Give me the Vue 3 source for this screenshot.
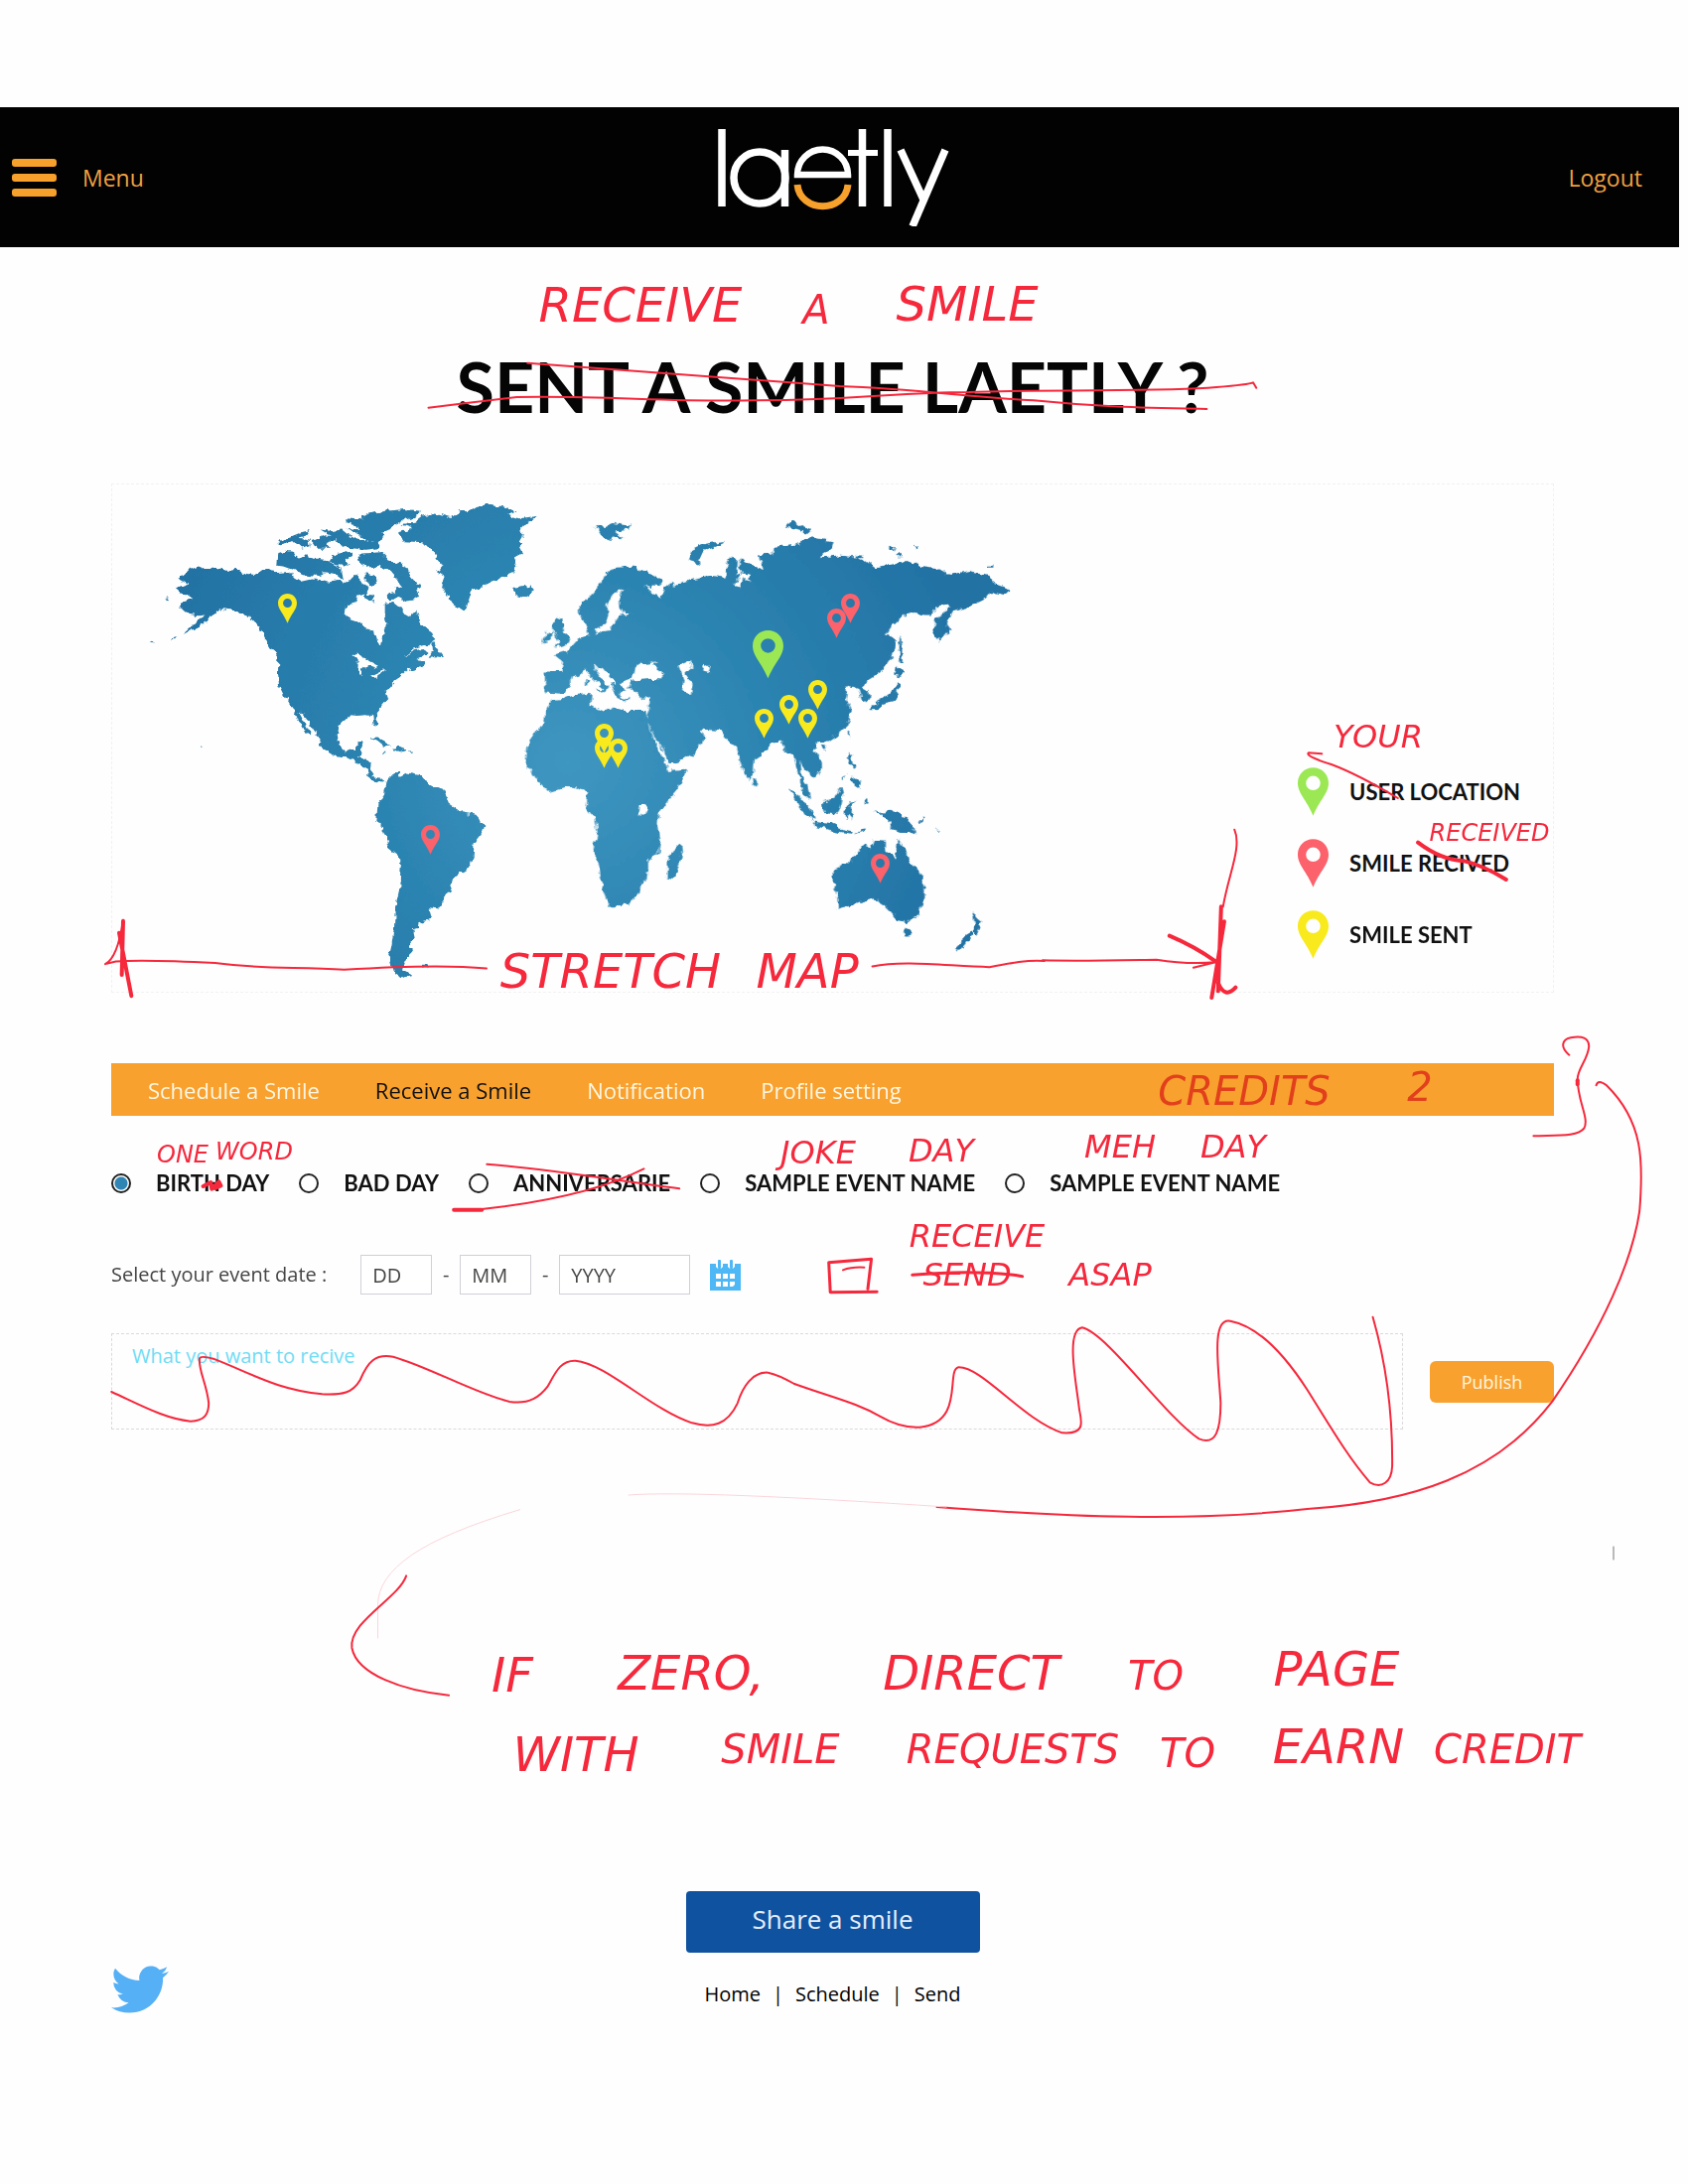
<script setup>
import { ref } from 'vue'

const tabs = ['Schedule a Smile', 'Receive a Smile', 'Notification', 'Profile setting']
const activeTab = ref(1)

const events = [
  { id: 'birthday', label: 'BIRTH DAY' },
  { id: 'badday', label: 'BAD DAY' },
  { id: 'anniversary', label: 'ANNIVERSARIE' },
  { id: 'sample-a', label: 'SAMPLE EVENT NAME' },
  { id: 'sample-b', label: 'SAMPLE EVENT NAME' },
]
const selectedEvent = ref('birthday')

const legend = [
  { kind: 'user', label: 'USER LOCATION' },
  { kind: 'received', label: 'SMILE RECIVED' },
  { kind: 'sent', label: 'SMILE SENT' },
]

const pins = [
  { kind: 'sent', x: 279, y: 597, w: 19 },
  { kind: 'received', x: 423, y: 830, w: 19 },
  { kind: 'user', x: 757, y: 634, w: 31 },
  { kind: 'received', x: 846, y: 597, w: 19 },
  { kind: 'received', x: 832, y: 612, w: 19 },
  { kind: 'sent', x: 813, y: 684, w: 19 },
  { kind: 'sent', x: 784, y: 699, w: 19 },
  { kind: 'sent', x: 759, y: 713, w: 19 },
  { kind: 'sent', x: 803, y: 713, w: 19 },
  { kind: 'sent', x: 598, y: 743, w: 19 },
  { kind: 'sent', x: 598, y: 728, w: 19 },
  { kind: 'sent', x: 612, y: 743, w: 19 },
  { kind: 'received', x: 876, y: 859, w: 19 },
]

// Reviewer's handwritten words: centre x, baseline y, text size
const notes = [
  { t: 'RECEIVE', x: 645, y: 324, s: 48 },
  { t: 'A', x: 822, y: 326, s: 40 },
  { t: 'SMILE', x: 974, y: 323, s: 48 },
  { t: 'STRETCH', x: 615, y: 995, s: 48 },
  { t: 'MAP', x: 813, y: 995, s: 48 },
  { t: 'YOUR', x: 1388, y: 753, s: 32 },
  { t: 'RECEIVED', x: 1500, y: 847, s: 24 },
  { t: 'CREDITS', x: 1253, y: 1113, s: 40, on: true },
  { t: '2', x: 1430, y: 1109, s: 40, on: true },
  { t: 'ONE', x: 184, y: 1171, s: 24 },
  { t: 'WORD', x: 256, y: 1168, s: 24 },
  { t: 'JOKE', x: 824, y: 1172, s: 32 },
  { t: 'DAY', x: 948, y: 1170, s: 32 },
  { t: 'MEH', x: 1128, y: 1166, s: 32 },
  { t: 'DAY', x: 1242, y: 1166, s: 32 },
  { t: 'RECEIVE', x: 984, y: 1256, s: 32 },
  { t: 'SEND', x: 974, y: 1295, s: 32 },
  { t: 'ASAP', x: 1118, y: 1295, s: 32 },
  { t: 'IF', x: 516, y: 1704, s: 48 },
  { t: 'ZERO,', x: 696, y: 1702, s: 48 },
  { t: 'DIRECT', x: 978, y: 1702, s: 48 },
  { t: 'TO', x: 1164, y: 1702, s: 40 },
  { t: 'PAGE', x: 1346, y: 1698, s: 48 },
  { t: 'WITH', x: 580, y: 1784, s: 48 },
  { t: 'SMILE', x: 786, y: 1776, s: 40 },
  { t: 'REQUESTS', x: 1020, y: 1776, s: 40 },
  { t: 'TO', x: 1196, y: 1780, s: 40 },
  { t: 'EARN', x: 1348, y: 1776, s: 48 },
  { t: 'CREDIT', x: 1518, y: 1776, s: 40 },
]
</script>

<template>
  <div class="sheet">
    <svg class="defs" aria-hidden="true">
      <symbol id="pin" viewBox="0 0 32 50">
        <path fill-rule="evenodd" d="M16 0C7 0 0 7 0 16c0 11 9 17 16 34 7-17 16-23 16-34C32 7 25 0 16 0zM16 8.500a7.500 7.500 0 1 1 0 15 7.500 7.500 0 0 1 0-15z" />
      </symbol>
    </svg>

    <header class="topbar">
      <button class="menu" type="button">
        <svg width="45" height="38" viewBox="0 0 45 38" aria-hidden="true">
          <rect width="45" height="8" rx="3" /><rect y="15" width="45" height="8" rx="3" /><rect y="30" width="45" height="8" rx="3" />
        </svg>
        <span>Menu</span>
      </button>
      <svg class="logo" viewBox="0 0 234 98" role="img" aria-label="laetly">
        <g fill="none" stroke="#fff" stroke-width="7.500">
          <line x1="4" y1="0" x2="4" y2="78" />
          <circle cx="42" cy="49" r="26" />
          <line x1="67.500" y1="21" x2="67.500" y2="78" />
          <path d="M80 46a25.500 25.500 0 0 1 51 0z" stroke-width="6.500" />
          <path d="M80 56c3 29 48 29 51 0" stroke="#f7a02c" stroke-width="7" />
          <line x1="145.500" y1="0" x2="145.500" y2="78" />
          <line x1="131" y1="24" x2="161" y2="24" stroke-width="6" />
          <line x1="171" y1="0" x2="171" y2="78" />
          <line x1="184" y1="21" x2="207" y2="71" />
          <line x1="229" y1="21" x2="196" y2="98" />
        </g>
      </svg>
      <a class="logout" href="#logout">Logout</a>
    </header>

    <main>
      <h1>SENT A SMILE LAETLY ?</h1>

      <section class="map-panel" aria-label="Smile map">
        <svg class="map" viewBox="112 487 920 511" role="img" aria-label="World map with smile pins">
          <defs>
            <radialGradient id="sea-west" gradientUnits="userSpaceOnUse" cx="1467" cy="849" r="1300">
              <stop offset="0" stop-color="#3f97c1" /><stop offset=".5" stop-color="#2b83b0" /><stop offset="1" stop-color="#2373a4" />
            </radialGradient>
            <radialGradient id="sea-east" gradientUnits="userSpaceOnUse" cx="200" cy="849" r="1200">
              <stop offset="0" stop-color="#3f97c1" /><stop offset=".5" stop-color="#2b83b0" /><stop offset="1" stop-color="#2272a4" />
            </radialGradient>
            <filter id="coast" filterUnits="userSpaceOnUse" x="112" y="487" width="920" height="511">
              <feTurbulence type="fractalNoise" baseFrequency="0.15" numOctaves="2" seed="4" />
              <feDisplacementMap in="SourceGraphic" scale="7" xChannelSelector="R" yChannelSelector="G" />
            </filter>
          </defs>
          <g filter="url(#coast)">
            <g transform="translate(100 480) scale(.33333 .338)" fill="url(#sea-west)">
              <!-- North and Central America -->
              <path d="M300 262L325 272 345 267 380 277 420 275 440 286 470 290 490 275 512 270 525 285 560 282 590 298 610 310 640 303 690 312 720 308 745 315 760 300 775 285 790 315 812 328 800 345 775 352 768 368 740 390 737 405 750 420 780 430 800 450 825 458 835 490 846 495 855 458 866 440 860 410 860 375 885 370 905 385 918 405 935 415 955 395 965 425 980 445 1005 465 1015 485 1000 495 960 505 935 520 915 535 950 515 975 512 990 520 970 535 955 545 985 548 975 560 950 568 925 575 905 595 890 605 875 625 860 635 868 660 850 680 833 700 838 740 830 745 822 710 800 708 775 710 750 708 725 730 716 765 722 800 740 818 768 808 778 788 795 784 788 815 780 835 808 840 818 850 815 875 825 890 845 895 860 905 850 910 830 905 810 890 800 865 775 850 745 835 710 832 675 812 663 795 665 780 645 755 620 715 598 695 630 755 635 772 620 760 600 725 585 690 555 650 540 620 537 580 538 540 520 515 500 485 478 445 455 420 430 405 395 395 365 390 345 400 325 430 315 430 325 408 300 412 270 408 240 395 245 375 275 365 270 348 240 345 225 332 265 318 240 305 235 298 255 290 270 272z" />
              <path d="M325 405L345 385 350 392 325 420 295 445 248 468 280 440 300 420zM216 480l12-4-6 8zM152 491l8-4v6zM195 358l14-2-5 6zM303 803l8 2-4 6z" />
              <!-- Arctic archipelago -->
              <path d="M535 225L560 218 585 222 595 240 620 232 640 245 665 245 690 250 712 262 730 275 735 308 712 290 680 285 650 296 610 290 585 275 555 265 532 262z" />
              <path d="M538 190L575 175 600 165 635 157 625 172 600 180 632 185 635 205 610 212 585 190 560 195 540 200zM640 190L680 172 705 175 715 195 690 190 680 202 700 212 655 212zM665 155L700 160 730 155 755 175 790 185 840 190 848 210 800 215 750 210 720 195 700 175zM692 250L710 225 740 220 765 232 740 245 755 262 720 262z" />
              <path d="M738 122L780 125 810 108 860 100 920 95 970 100 945 118 910 130 880 152 850 165 858 182 835 192 800 182 765 165 742 150 785 155 775 140 745 135z" />
              <path d="M780 230L815 228 850 225 868 242 898 255 925 268 935 295 955 318 972 322 955 335 965 355 950 365 925 368 905 358 870 362 865 350 895 345 890 330 912 325 895 300 875 278 840 265 810 268 785 250zM800 285l30 8 5 25-20 5-15-15zM798 345l30 8-5 18-25-12z" />
              <!-- Greenland and Iceland -->
              <path d="M900 165L945 152 910 140 955 130 975 115 1010 105 1060 118 1085 98 1115 98 1135 85 1180 80 1225 88 1260 102 1230 112 1265 122 1320 115 1285 138 1270 155 1280 180 1265 205 1275 225 1248 240 1258 262 1245 285 1210 300 1175 312 1150 330 1122 338 1112 370 1103 400 1080 385 1065 375 1045 345 1030 320 1040 295 1018 280 1035 262 1018 242 1000 210 965 192 915 190z" />
              <path d="M1240 325l18 5 25-5 20-4 8 20-30 17-25-6-8-14z" />
              <!-- Newfoundland, Cuba, Hispaniola -->
              <path d="M1003 495l10-3 5 18 22 28-25-5-20 2 10-18zM812 773l25 0 42 24-20 4-22-18zM885 808l15-5 22 6-20 8zM853 816h10v4h-10zM932 815h12v4h-12zM975 1452h18l-4 8-12-2z" />
              <!-- South America -->
              <path d="M862 905L880 885 900 875 905 890 925 880 970 888 990 912 1035 928 1050 955 1052 972 1095 998 1135 1005 1162 1035 1155 1060 1130 1090 1127 1130 1112 1165 1065 1195 1060 1225 1040 1255 1020 1285 995 1282 1000 1315 965 1325 962 1345 945 1350 950 1372 932 1395 942 1412 925 1435 915 1465 940 1485 910 1493 885 1475 872 1430 880 1395 888 1340 890 1285 903 1230 910 1135 872 1105 855 1050 835 1022 838 975 858 945z" />
              <!-- Great Lakes -->
              <path fill="#fff" d="M760 535l25-12 18 18 35 18v10l-30-10-15 12-5 20-8-2 2-35zM815 592l48-22-35 28z" />
            </g>
            <g transform="translate(500 480) scale(.35714 .338)" fill="url(#sea-east)">
              <!-- Europe and Asia -->
              <path d="M133 578L180 580 185 550 162 530 195 520 225 485 260 470 250 435 230 405 228 380 265 350 295 310 305 285 335 268 385 265 410 280 440 290 462 305 462 320 430 318 445 345 465 350 470 330 495 310 500 325 520 312 560 300 600 292 640 298 645 260 660 238 678 250 672 290 690 285 680 262 690 240 715 262 750 275 745 255 735 232 775 230 780 210 840 200 885 178 945 190 940 215 905 240 960 232 1010 238 1040 250 1065 270 1120 260 1150 245 1190 262 1240 270 1275 290 1330 278 1385 290 1405 320 1445 335 1430 350 1390 340 1370 365 1330 385 1300 395 1285 400 1265 440 1275 455 1245 490 1225 460 1235 425 1260 405 1280 380 1240 385 1215 410 1175 405 1140 415 1110 445 1098 465 1125 485 1120 520 1085 575 1050 600 1030 620 1052 650 1040 670 1030 665 1020 630 990 620 975 630 988 645 985 660 998 700 985 740 960 765 925 790 900 790 895 815 915 850 915 875 895 897 865 868 855 845 858 890 875 920 882 960 862 940 848 885 835 830 815 820 800 785 770 800 740 830 725 840 722 880 708 905 690 870 675 805 655 790 630 755 570 750 535 750 515 710 522 708 545 740 570 745 585 775 560 820 500 855 483 855 470 815 440 770 418 720 428 690 430 655 405 655 370 630 375 605 420 598 465 600 460 575 440 560 450 548 425 555 395 560 380 600 350 612 360 635 350 648 330 610 290 575 275 565 290 600 315 620 300 640 295 622 260 590 245 575 230 590 210 595 200 625 185 645 135 640z" />
              <path d="M163 415l20 8 2 28 20 30-5 15-38 12 12-18-10-20-10-20zM135 465l20-8-2 30-25 8zM275 145l30 3 20-12 50 8-5 12-40 5 25 20-30-2-5 10-22-8zM540 250l10-35 35-18 55-8-5 8-50 18-20 25 5 20zM810 145l20-18 30 20 25 10-10 10-25-12zM1107 200l15 5-5 15-10-5zM1175 203l12 5-7 8zM1010 232h18v8h-18zM1380 262h18v6h-18zM1125 228h16v6h-16zM275 628l25 8-2 8zM250 600l8 5-3 18-6-2zM345 658h28v5h-28zM400 655l14 0-8 6z" />
              <path fill="#fff" d="M358 332L345 350 345 380 355 402 385 402 345 410 325 440 318 455 290 460 275 470 275 452 300 440 312 410 310 375 330 345zM385 570L405 552 430 572 465 582 465 602 430 600 382 605zM510 560L540 545 550 565 530 585 550 620 545 645 520 640 525 600zM585 555l15 10-5 15-15-5zM415 320l50 25-5 12-28-18zM690 285l-25 40 15 5 10-30 18 0 8 15-5-25zM275 562l15 28 18 15 30 50 30-2 5-25-25 15-22-40-30-35z" />
              <path d="M280 590l30 25-5 25-10 2 3-22-20-12zM320 612l30 5 15 20-20 5 2 20-12-5z" />
              <!-- Africa and Madagascar -->
              <path d="M152 662L185 660 215 648 265 645 262 680 300 700 325 685 360 695 415 695 425 740 450 800 485 875 535 872 515 920 485 960 455 1005 452 1030 460 1080 455 1115 425 1145 425 1190 405 1210 400 1235 370 1272 312 1280 295 1220 285 1150 268 1115 282 1060 275 1015 250 985 255 940 225 925 200 920 145 938 110 900 80 850 85 795 110 755 132 730 135 695z" />
              <path d="M520 1088l3 25-20 75-8 10-15-5 0-60 15-20z" />
              <path fill="#fff" d="M402 976h15l3 14-6 14h-10l-4-10z" />
              <!-- East and South-East Asia islands -->
              <path d="M1135 468l8 40 2 45-10 0-2-50zM1125 562l25 15-15 15-15-5zM1128 605l5 15-8 45-35 8-25 20-10 0 0-15 35-20 25-25zM990 757l8 2-5 20zM915 795l15 2-8 20zM992 818l10 10-2 25 15 10-10 5-15-20zM1005 890l20 15-5 20-15-5-10-20zM985 880l-15 20 5 2zM720 895l15 15-5 12-8-8zM822 925l35 30 30 40 8 25-25-10-20-30zM915 970l30-10 25-40 5 25-5 30-10 30-40-5zM892 1025l50 8 30 15 30 5-5 8-50-8-50-15zM985 970l30-5-25 15 12 10-2 30-12-15-5 15-5-25zM1005 1065l30-20 0 8zM1065 990l20 8 25-5 30 10 25 25 20 38-25-10-25 0-25-10-5-20zM1185 1030l15-15 2 5-12 12zM1240 1045l8 10-5 0zM1035 960h8v12h-8z" />
              <!-- Australia and New Zealand -->
              <path d="M945 1170L995 1145 1015 1115 1032 1095 1055 1105 1065 1080 1095 1082 1095 1110 1120 1135 1130 1078 1145 1100 1160 1140 1190 1170 1205 1215 1205 1250 1185 1305 1150 1325 1130 1320 1110 1295 1090 1275 1060 1255 1025 1265 1000 1275 960 1285 958 1250 945 1200zM1145 1345l22 5-5 18h-10zM1338 1290l15 25 12 10-12 35-12-5 5-22zM1335 1350l6 12-20 25-20 25-10-12 25-25z" />
            </g>
          </g>
          <svg v-for="(p, i) in pins" :key="i" :x="p.x" :y="p.y" :width="p.w" :height="p.w * 1.56" viewBox="0 0 32 50" :class="p.kind">
            <use href="#pin" width="32" height="50" />
          </svg>
        </svg>
        <ul class="legend">
          <li v-for="l in legend" :key="l.kind">
            <svg :class="l.kind" width="31" height="49" aria-hidden="true"><use href="#pin" width="31" height="49" /></svg>
            <span>{{ l.label }}</span>
          </li>
        </ul>
      </section>

      <nav class="tabs">
        <a v-for="(tab, i) in tabs" :key="tab" href="#" :class="{ active: i === activeTab }" @click.prevent="activeTab = i">{{ tab }}</a>
      </nav>

      <form @submit.prevent>
        <div class="events">
          <label v-for="e in events" :key="e.id">
            <input v-model="selectedEvent" type="radio" name="event" :value="e.id">
            <span>{{ e.label }}</span>
          </label>
        </div>

        <div class="date">
          <label for="day">Select your event date :</label>
          <input id="day" type="text" placeholder="DD">
          <span>-</span>
          <input type="text" placeholder="MM" aria-label="Month">
          <span>-</span>
          <input class="year" type="text" placeholder="YYYY" aria-label="Year">
          <button type="button" class="calendar" aria-label="Open calendar">
            <svg width="31" height="31" viewBox="0 0 31 31">
              <path d="M0 4h6v3a4 4 0 0 0 7 0V4h5v3a4 4 0 0 0 7 0V4h6v27H0z" />
              <rect x="8" y="0" width="3" height="9" rx="1" /><rect x="20" y="0" width="3" height="9" rx="1" />
              <path fill="#fff" d="M6 14h5v5H6zM13 14h5v5h-5zM20 14h5v5h-5zM6 22h5v5H6zM13 22h5v5h-5zM20 22h5v3l-2 2h-3z" />
            </svg>
          </button>
        </div>

        <div class="compose">
          <textarea placeholder="What you want to recive" aria-label="What you want to receive"></textarea>
          <button type="submit" class="publish">Publish</button>
        </div>
      </form>
    </main>

    <footer>
      <a class="twitter" href="#twitter" aria-label="Twitter">
        <svg width="58" height="50" viewBox="0 2 24 20"><path d="M23.953 4.570a10 10 0 01-2.825.775 4.958 4.958 0 002.163-2.723c-.951.555-2.005.959-3.127 1.184a4.920 4.920 0 00-8.384 4.482C7.690 8.095 4.067 6.130 1.640 3.162a4.822 4.822 0 00-.666 2.475c0 1.710.870 3.213 2.188 4.096a4.904 4.904 0 01-2.228-.616v.060a4.923 4.923 0 003.946 4.827 4.996 4.996 0 01-2.212.085 4.936 4.936 0 004.604 3.417 9.867 9.867 0 01-6.102 2.105c-.390 0-.779-.023-1.170-.067a13.995 13.995 0 007.557 2.209c9.053 0 13.998-7.496 13.998-13.985 0-.210 0-.420-.015-.630A9.935 9.935 0 0024 4.590z" /></svg>
      </a>
      <div class="foot-center">
        <button type="button" class="share">Share a smile</button>
        <div class="links">
          <a href="#home">Home</a><span>|</span><a href="#schedule">Schedule</a><span>|</span><a href="#send">Send</a>
        </div>
      </div>
    </footer>

    <svg class="markup" viewBox="0 0 1700 2200">
      <text v-for="(n, i) in notes" :key="i" :x="n.x" :y="n.y" :class="['s' + n.s, { on: n.on }]">{{ n.t }}</text>
      <!-- heading strike-through -->
      <g transform="translate(0 90) scale(1.0842 .33333)">
        <path d="M398 962Q440 945 480 930C560 925 620 945 700 940C800 940 830 915 900 915C1000 905 1080 915 1130 900Q1160 892 1164 886L1167 902M490 827C600 855 700 880 780 897C850 905 900 930 960 940C1020 960 1060 962 1121 966" />
      </g>
      <!-- map width arrow -->
      <g transform="translate(100 480) scale(.33333 .338)">
        <path d="M18 1453Q55 1435 72 1322M18 1453L50 1445C150 1440 250 1445 350 1450C500 1470 600 1460 740 1470C900 1460 1050 1455 1170 1466" />
        <path class="thick" d="M72 1325L68 1485M60 1360L97 1548" />
      </g>
      <g transform="translate(500 480) scale(.35714 .338)">
        <path d="M1060 1460C1150 1440 1280 1460 1390 1462C1450 1450 1500 1440 1545 1444" />
      </g>
      <g transform="translate(1050 680) scale(.38265 .33333)">
        <path d="M0 862C100 865 200 862 300 860Q380 875 455 868L397 884M505 467C525 520 490 600 475 700M735 238L700 235Q690 245 760 270Q830 300 935 372M1386 1148C1362 1125 1366 1102 1390 1096C1420 1088 1438 1098 1438 1122C1436 1160 1408 1190 1408 1220C1408 1290 1440 1340 1425 1370C1410 1395 1350 1390 1292 1393" />
        <path class="thick" d="M334 788Q400 820 455 865M470 700L462 955M478 745L445 975M462 930Q480 980 508 944M988 506Q1050 560 1110 562Q1160 575 1220 618" />
        <path d="M1408 1225v12" class="thick" />
      </g>
      <!-- event row marks -->
      <g transform="translate(100 1050) scale(.5102 .33333)">
        <path d="M765 368C900 385 1030 420 1145 442M1075 382C1000 440 900 480 755 504" />
        <path class="thick" d="M700 506h55M205 435l15-12 2 20 14-22 4 12-12 8" />
        <path class="pen" d="M1440 665L1524 655L1517 745M1440 665L1443 755L1535 754" />
        <path d="M1468 688Q1485 678 1510 680" />
        <path d="M24 1056C80 1095 130 1138 180 1145C210 1145 216 1120 216 1090C212 1030 195 990 198 955Q200 946 225 956C300 1000 350 1050 440 1063C480 1066 500 1060 515 1020C530 965 545 940 580 950C650 980 740 1060 810 1086C850 1095 870 1070 885 1040C900 1000 910 960 940 962C1000 970 1090 1110 1170 1150C1210 1168 1240 1155 1260 1090C1270 1040 1290 995 1320 998Q1340 1004 1372 1032" />
      </g>
      <g transform="translate(800 1020) scale(.57398 .33333)">
        <path d="M0 1122C70 1165 110 1180 150 1220C180 1250 200 1255 220 1253C300 1240 265 1080 288 1072C330 1070 400 1230 470 1270C510 1275 505 1240 500 1200C495 1120 475 960 505 952C550 970 650 1220 710 1288C740 1310 748 1260 748 1180C745 1080 730 920 765 932C820 950 870 1060 900 1140C940 1250 970 1340 1010 1420C1030 1440 1048 1420 1049 1370C1050 1200 1035 1040 1015 920" />
        <path d="M1407 220Q1410 200 1425 220C1490 330 1490 450 1483 600C1470 750 1420 950 1330 1175C1230 1400 1080 1480 900 1500C700 1540 480 1525 250 1494" />
        <path d="M207 793Q320 775 400 797" class="pen" />
      </g>
      <g transform="translate(330 1480) scale(.84184 .33333)">
        <path class="faint" d="M740 114Q600 90 500 80T360 78M230 122Q140 190 100 260T60 410V510" />
        <path d="M94 322C85 390 25 460 29 540C35 620 90 670 145 683" />
      </g>
      <path class="scratch" d="M1625 1558v13" />
    </svg>
  </div>
</template>

<style>
body { background: #fefefe; }
</style>

<style scoped>
* { box-sizing: border-box; }
.sheet { position: relative; padding-top: 108px; padding-bottom: 165px; font: 20px/28px "Open Sans", sans-serif; color: #111; overflow: hidden; }
.defs { position: absolute; width: 0; height: 0; }
button { font: inherit; border: 0; padding: 0; background: none; cursor: pointer; }
a { color: inherit; text-decoration: none; }

.topbar { display: grid; grid-template-columns: 1fr auto 1fr; align-items: center; height: 141px; margin-right: 9px; padding: 0 23px 0 12px; background: #020202; color: #f0a040; font-size: 23px; }
.menu { display: flex; align-items: center; gap: 26px; color: inherit; justify-self: start; }
.menu svg { fill: #f7a02c; }
.logo { width: 234px; height: 98px; }
.logout { justify-self: end; padding-right: 14px; }

main { margin: 0 135px 0 112px; }
h1 { margin: 0; padding: 96px 0 54px; font: 700 70px/88px Lato, sans-serif; text-align: center; color: #050505; }

.map-panel { display: flex; justify-content: space-between; align-items: flex-end; min-height: 512px; border: 1px dashed #f1f1f3; }
.map { flex: 0 1 920px; min-width: 0; }
.legend { list-style: none; margin: 0; padding: 0 33px 33px 0; display: grid; gap: 23px; font: 700 22px/28px Lato, sans-serif; }
.legend li { display: flex; align-items: center; gap: 21px; }
.user { fill: #9be854; }
.received { fill: #fb626c; }
.sent { fill: #f8ea1c; }

.tabs { display: flex; align-items: center; gap: 56px; height: 53px; margin-top: 71px; padding: 0 37px; background: #f8a12f; color: #fff6e0; font-size: 22px; }
.tabs .active { color: #111; }

.events { display: flex; flex-wrap: wrap; gap: 30px; margin-top: 52px; font: 700 22px/32px Lato, sans-serif; }
.events label { display: flex; align-items: center; gap: 25px; }
.events input { appearance: none; width: 20px; height: 20px; margin: 0; border: 2px solid #222; border-radius: 50%; background: #fff; }
.events input:checked { background: radial-gradient(circle, #2f86b5 6px, #fff 7px); }

.date { display: flex; align-items: center; margin-top: 56px; color: #444; }
.date > label { margin-right: 34px; }
.date > span { width: 28px; text-align: center; }
.date input { width: 72px; height: 40px; padding: 0 11px; border: 1px solid #cfd0d8; font: inherit; background: #fff; }
.date .year { width: 132px; }
.date input::placeholder { color: #444; opacity: 1; }
.calendar { margin-left: 20px; height: 31px; }
.calendar svg { display: block; fill: #4db8f5; }

.compose { display: flex; align-items: center; gap: 27px; margin-top: 39px; }
textarea { flex: 1; height: 97px; padding: 8px 20px; border: 1px dashed #dadade; font: inherit; background: transparent; resize: none; }
textarea::placeholder { color: #6fdcf5; opacity: 1; }
.publish { width: 125px; height: 42px; border-radius: 6px; background: #f8a12f; color: #fff6e0; font-size: 18px; }

footer { display: grid; grid-template-columns: 1fr auto 1fr; align-items: end; margin: 465px 135px 0 112px; }
.twitter svg { display: block; fill: #55b0f6; }
.foot-center { display: grid; justify-items: center; gap: 28px; padding-bottom: 6px; }
.share { width: 296px; height: 62px; padding-bottom: 6px; border-radius: 4px; background: #0f52a0; color: #e6eefc; font-size: 26px; }
.links { display: flex; gap: 12px; color: #000; }

.markup { position: absolute; top: 0; left: 0; width: 100%; pointer-events: none; fill: none; }
.markup path { stroke: #f5283c; stroke-width: 2px; stroke-linecap: round; stroke-linejoin: round; vector-effect: non-scaling-stroke; }
.markup .pen { stroke-width: 3px; }
.markup .thick { stroke-width: 4px; }
.markup .faint { stroke: #fbd5da; stroke-width: 1px; }
.markup .scratch { stroke: #777; stroke-width: 1px; }
.markup text { fill: #f5283c; font-family: "DejaVu Sans", sans-serif; font-style: italic; font-weight: 200; text-anchor: middle; }
.markup .on { fill: #e2401c; }
.s24 { font-size: 24px; }
.s32 { font-size: 32px; }
.s40 { font-size: 40px; }
.s48 { font-size: 48px; }
</style>
